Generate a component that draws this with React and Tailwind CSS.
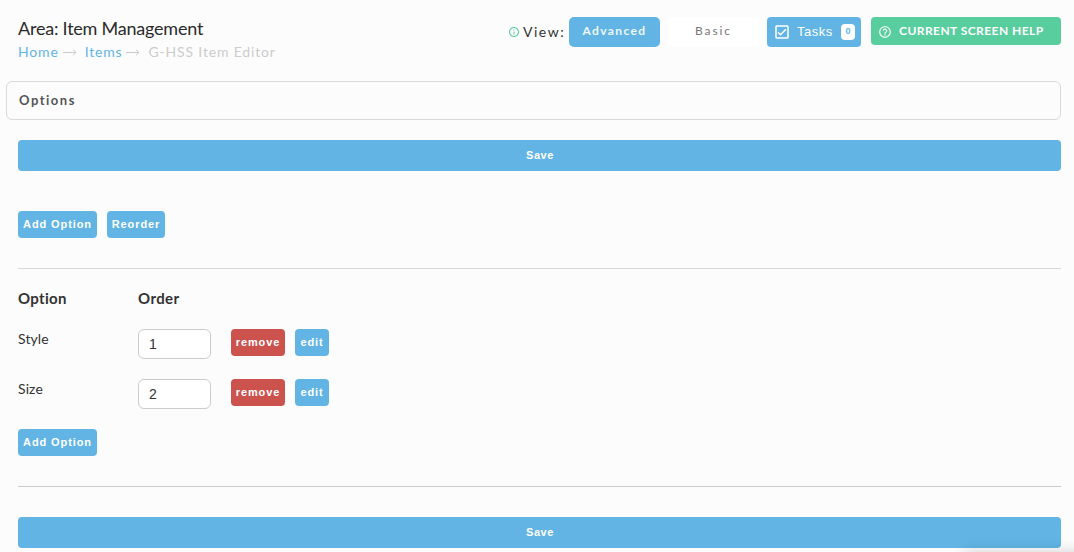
import React from "react";
import { MdInfoOutline, MdHelpOutline, MdOutlineCheckBox } from "react-icons/md";

function Arrow() {
  return (
    <svg className="h-[9px] w-[14px] shrink-0" viewBox="0 0 14 9" fill="none" stroke="#cccccc" strokeWidth="1">
      <path d="M0 4.5H13M10 1.8L13 4.5L10 7.2" />
    </svg>
  );
}

function Small({ children, className = "bg-[#61b4e4]" }) {
  return (
    <button
      className={
        "flex h-[27px] items-center justify-center whitespace-nowrap rounded-[4px] font-['Liberation_Sans',sans-serif] text-[11px] font-bold leading-none tracking-[.9px] text-white " +
        className
      }
    >
      {children}
    </button>
  );
}

function Save({ className }) {
  return (
    <button
      className={
        "ml-[18px] flex h-[31px] w-[1043px] items-center justify-center rounded-[4px] bg-[#61b4e4] pl-px font-['Liberation_Sans',sans-serif] text-[11px] font-bold leading-none tracking-[.6px] text-white " +
        className
      }
    >
      Save
    </button>
  );
}

function Row({ name, order }) {
  return (
    <div className="flex h-[50px] items-start">
      <div className="w-[120px] text-[14px] leading-[19px] tracking-[.1px]">{name}</div>
      <input
        className="h-[30px] w-[73px] rounded-[6px] border border-[#cccccc] bg-white px-[10px] font-['Liberation_Sans',sans-serif] text-[14px] text-[#333333]"
        defaultValue={order}
      />
      <div className="ml-5 flex gap-[10px]">
        <Small className="w-[54px] bg-[#cc524e]">remove</Small>
        <Small className="w-[34px] bg-[#61b4e4]">edit</Small>
      </div>
    </div>
  );
}

export default function App() {
  return (
    <main className="relative h-[552px] w-[1074px] overflow-hidden bg-[#fcfcfc] font-[Lato,sans-serif] text-[#333333]">
      <header className="flex h-[81px] justify-between pl-[18px] pr-[13px] pt-[17px]">
        <div className="whitespace-nowrap">
          <h1 className="h-6 text-[18px] leading-[22px] tracking-[-.22px] text-[#2b2b2b]">Area: Item Management</h1>
          <nav className="flex h-[22px] items-center text-[14px] leading-[22px] tracking-[.83px] text-[#cccccc]">
            <a className="mr-1 text-[#61b4e4]">Home</a>
            <Arrow />
            <a className="ml-2 mr-1 text-[#61b4e4]">Items</a>
            <Arrow />
            <span className="ml-2">G-HSS Item Editor</span>
          </nav>
        </div>
        <div className="flex items-start whitespace-nowrap">
          <div className="flex h-[30px] items-center text-[14px] tracking-[1.5px]">
            <MdInfoOutline className="mr-[3px] size-3 text-[#58cd9e]" />
            <span className="w-[46px] pb-0.5">View:</span>
          </div>
          <button className="flex h-[30px] w-[91px] items-center justify-center rounded-[5px] bg-[#61b4e4] pb-[2px] text-[12px] font-bold tracking-[1.4px] text-white/90">
            Advanced
          </button>
          <button className="ml-2 flex h-[30px] w-[91px] items-center justify-center rounded-[5px] bg-white pb-[2px] text-[12px] tracking-[1.9px] text-[#777777]">
            Basic
          </button>
          <button className="ml-2 flex h-[30px] w-[94px] items-center rounded-[4px] bg-[#61b4e4] pl-[6px] font-['Liberation_Sans',sans-serif] text-[13px] text-white">
            <MdOutlineCheckBox className="size-[18px]" />
            <span className="ml-[6px] w-[44px] text-left tracking-[.5px]">Tasks</span>
            <span className="flex h-4 w-[14px] items-center justify-center rounded-[4px] bg-white text-[9px] font-bold text-[#61b4e4]">0</span>
          </button>
          <button className="ml-[10px] flex h-[28px] w-[190px] items-center rounded-[4px] bg-[#58cd9e] pl-[7px] text-[12px] font-bold text-white">
            <MdHelpOutline className="mt-0.5 size-[14px]" />
            <span className="ml-[7px] tracking-[.44px]">CURRENT SCREEN HELP</span>
          </button>
        </div>
      </header>
      <section className="ml-[6px] flex h-[39px] w-[1055px] items-center rounded-[6px] border border-[#d9d9d9] pl-3 text-[13px] font-bold tracking-[1.5px] text-[#555555]">
        Options
      </section>
      <Save className="mt-5" />
      <div className="ml-[18px] mt-10 flex gap-[10px]">
        <Small className="w-[79px] bg-[#61b4e4]">Add Option</Small>
        <Small className="w-[58px] bg-[#61b4e4]">Reorder</Small>
      </div>
      <hr className="ml-[18px] mt-[30px] w-[1043px] border-[#d7d7d7]" />
      <section className="ml-[18px]">
        <div className="flex h-[60px] pt-5 text-[15px] font-bold leading-[18px] tracking-[.3px]">
          <div className="w-[120px]">Option</div>
          <div className="tracking-[.4px]">Order</div>
        </div>
        <Row name="Style" order="1" />
        <Row name="Size" order="2" />
        <Small className="w-[79px] bg-[#61b4e4]">Add Option</Small>
      </section>
      <hr className="ml-[18px] mt-[30px] w-[1043px] border-[#cccccc]" />
      <Save className="mt-[30px]" />
      <div className="pointer-events-none absolute bottom-[-12px] right-[-20px] h-[12px] w-[130px] shadow-[0_0_14px_rgba(0,0,0,0.18)]" />
    </main>
  );
}
